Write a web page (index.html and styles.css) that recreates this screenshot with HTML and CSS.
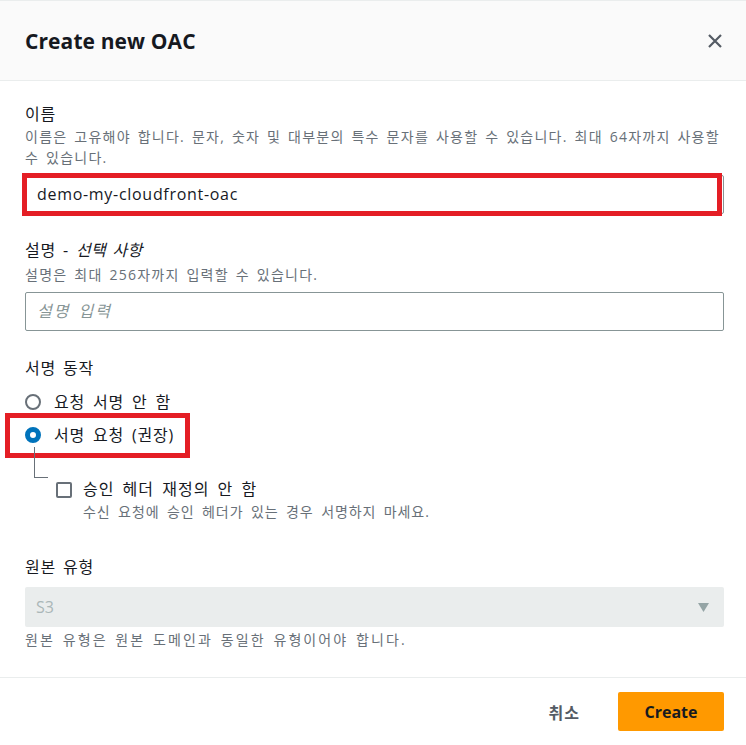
FILE: index.html
```html
<!DOCTYPE html>
<html lang="ko">
<head>
<meta charset="utf-8">
<title>Create new OAC</title>
<link rel="stylesheet" href="styles.css">
</head>
<body>
<div class="modal">
  <header class="header">
    <h2 class="title">Create new OAC</h2>
    <button class="close" aria-label="닫기">
      <svg width="16" height="16" viewBox="0 0 16 16"><path d="M2 2 L14 14 M14 2 L2 14" stroke="#545b64" stroke-width="2.2" fill="none"/></svg>
    </button>
  </header>

  <main class="content">
    <section class="field f-name">
      <div class="label">이름</div>
      <div class="hint">이름은 고유해야 합니다. 문자, 숫자 및 대부분의 특수 문자를 사용할 수 있습니다. 최대 64자까지 사용할 수 있습니다.</div>
      <div class="input-wrap">
        <div class="input value">demo-my-cloudfront-oac</div>
        <div class="mark mark-input"></div>
      </div>
    </section>

    <section class="field f-desc">
      <div class="label">설명 - <i>선택 사항</i></div>
      <div class="hint">설명은 최대 256자까지 입력할 수 있습니다.</div>
      <div class="input placeholder">설명 입력</div>
    </section>

    <section class="field f-sign">
      <div class="label">서명 동작</div>
      <div class="radio-row r1">
        <span class="radio"></span>
        <span class="opt">요청 서명 안 함</span>
      </div>
      <div class="radio-row r2">
        <span class="radio checked"></span>
        <span class="opt">서명 요청 (권장)</span>
        <div class="mark mark-radio"></div>
      </div>
      <div class="sub">
        <span class="connector"></span>
        <div class="check-row">
          <span class="checkbox"></span>
          <div class="check-text">
            <div class="opt">승인 헤더 재정의 안 함</div>
            <div class="sub-hint">수신 요청에 승인 헤더가 있는 경우 서명하지 마세요.</div>
          </div>
        </div>
      </div>
    </section>

    <section class="field f-origin">
      <div class="label">원본 유형</div>
      <div class="select">
        <span>S3</span>
        <svg width="11" height="9" viewBox="0 0 11 9"><path d="M0 0 H11 L5.5 9 Z" fill="#95a5a6"/></svg>
      </div>
      <div class="hint">원본 유형은 원본 도메인과 동일한 유형이어야 합니다.</div>
    </section>
  </main>

  <footer class="footer">
    <button class="cancel">취소</button>
    <button class="primary">Create</button>
  </footer>
</div>
</body>
</html>
```

FILE: styles.css
```css
* { box-sizing: border-box; }
html, body { margin: 0; padding: 0; background: #fff; }
body {
  font-family: "Open Sans", "Noto Sans CJK KR", sans-serif;
  color: #16191f;
}
.modal { width: 746px; height: 745px; display: flex; flex-direction: column; }

.header {
  height: 81px;
  flex: none;
  background: #fafafa;
  border-top: 1px solid #eaeded;
  border-bottom: 1px solid #eaeded;
  display: flex;
  align-items: center;
  justify-content: space-between;
  padding: 0 23px 0 25px;
}
.title { margin: 0; font-size: 21px; font-weight: 700; letter-spacing: 0.1px; }
.close { background: none; border: 0; padding: 0; width: 16px; height: 16px; display: flex; }

.content { padding: 21px 22px 0 25px; flex: 1; }
.label { font-size: 16px; line-height: 24px; word-spacing: 2px; letter-spacing: 0.8px; }
.label i { font-style: italic; letter-spacing: 0.3px; }
.hint { font-size: 14px; line-height: 21px; color: #687078; word-spacing: 2px; letter-spacing: 1.25px; }

.input-wrap { position: relative; margin-top: 7px; }
.input {
  height: 39px;
  border: 1px solid #879596;
  border-radius: 2px;
  font-size: 16px;
  line-height: 37px;
  padding: 0 11px;
}
.value { letter-spacing: 0.7px; }
.placeholder { color: #879596; font-style: italic; margin-top: 7px; word-spacing: 2px; letter-spacing: 2px; }
.mark { position: absolute; border: 5px solid #e41e25; pointer-events: none; }
.mark-input { top: -2px; left: -3px; right: 2px; bottom: -2px; }

.f-desc { margin-top: 24px; }
.f-desc .hint { margin-top: 2px; }
.f-sign { margin-top: 25px; }
.f-origin { margin-top: 32px; }

.radio-row { position: relative; display: flex; align-items: center; gap: 13px; height: 24px; }
.r1 { margin-top: 10px; }
.r2 { margin-top: 9px; }
.opt { font-size: 16px; line-height: 24px; word-spacing: 3px; letter-spacing: 0.8px; }
.radio {
  width: 16px; height: 16px; border-radius: 50%;
  border: 2px solid #687078; background: #fff; flex: none;
}
.radio.checked { border: 5px solid #0073bb; }
.mark-radio { top: -10px; bottom: -11px; left: -20px; width: 185px; }

.sub { position: relative; padding-left: 31px; padding-top: 30px; }
.connector {
  position: absolute; left: 9px; top: 0; width: 14px; height: 31px;
  border-left: 1px solid #687078; border-bottom: 1px solid #687078;
}
.check-row { display: flex; gap: 11px; align-items: flex-start; }
.checkbox {
  width: 16px; height: 16px; margin-top: 5px; flex: none;
  border: 2px solid #687078; border-radius: 2px; background: #fff;
}
.check-row .opt { letter-spacing: 1px; }
.sub-hint { font-size: 14px; line-height: 22px; color: #687078; word-spacing: 3px; letter-spacing: 0.9px; }

.select {
  margin-top: 8px;
  height: 40px;
  background: #eaeded;
  border-radius: 2px;
  display: flex; align-items: center; justify-content: space-between;
  padding: 0 15px 0 11px;
  font-size: 16px; color: #aab7b8;
}
.f-origin .hint { margin-top: 2px; letter-spacing: 2.1px; }

.footer {
  height: 68px;
  flex: none;
  border-top: 1px solid #eaeded;
  display: flex; align-items: center; justify-content: flex-end;
  padding: 0 22px 0 0;
  gap: 38px;
}
.cancel {
  background: none; border: 0; padding: 0;
  font-family: "Open Sans", "Noto Sans CJK KR", sans-serif;
  font-size: 16px; font-weight: 700; color: #545b64; letter-spacing: 1px;
}
.primary {
  width: 106px; height: 39px;
  background: #ff9900; border: 0; border-radius: 2px;
  font-family: "Open Sans", "Noto Sans CJK KR", sans-serif;
  font-size: 16px; font-weight: 700; color: #16191f;
}
```
